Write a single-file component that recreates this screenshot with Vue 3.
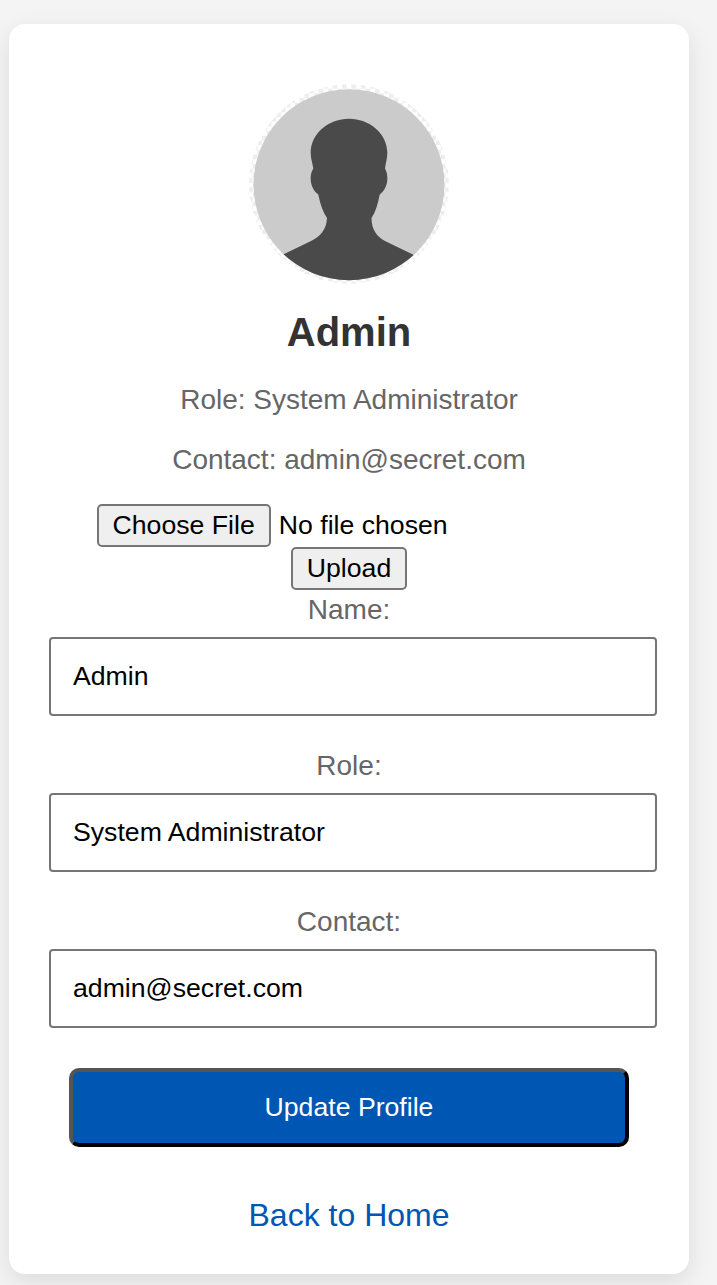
<script setup>
import { ref } from 'vue'

const profile = ref({
  name: 'Admin',
  role: 'System Administrator',
  contact: 'admin@secret.com',
})
const fields = [
  { key: 'name', label: 'Name:' },
  { key: 'role', label: 'Role:' },
  { key: 'contact', label: 'Contact:' },
]
</script>

<template>
  <main class="page">
    <section class="card">
      <svg class="avatar" viewBox="0 0 200 200" role="img" aria-label="Profile picture">
        <defs>
          <pattern id="checker" width="9.4" height="9.4" x="-1" y="0" patternUnits="userSpaceOnUse">
            <rect width="9.4" height="9.4" fill="#fff" />
            <rect width="4.7" height="4.7" fill="#eee" />
            <rect x="4.7" y="4.7" width="4.7" height="4.7" fill="#eee" />
          </pattern>
          <clipPath id="disc"><circle cx="100" cy="100.7" r="95.5" /></clipPath>
        </defs>
        <circle cx="100" cy="100" r="100" fill="url(#checker)" />
        <g clip-path="url(#disc)">
          <rect width="200" height="200" fill="#cbcbcb" />
          <path fill="#4a4a4a" d="M100 34.7C120 34.7 138.3 49 138.3 69C138.3 75 136.5 80 136 84.5C137.700 87.500 138.500 91.500 138.300 95.500C138 102 135 107.500 130.700 110.500C129 120 126.500 128 122.500 134C122.500 146 128 152.500 136 157L169 173V201H29V173L62 157C71 152.500 77.500 146 78 134C74 128 71 120 69.300 110.500C65 107.500 62 102 61.700 95.500C61.500 91.500 62.300 87.500 64.300 84.500C63.700 80 61.700 75 61.700 69C61.700 49 80 34.700 100 34.700Z" />
        </g>
      </svg>
      <h1>{{ profile.name }}</h1>
      <p>Role: {{ profile.role }}</p>
      <p>Contact: {{ profile.contact }}</p>
      <form class="upload" @submit.prevent>
        <div class="file">
          <button type="button" class="plain choose">Choose File</button>
          <span>No file chosen</span>
        </div>
        <button class="plain">Upload</button>
      </form>
      <form class="details" @submit.prevent>
        <div v-for="field in fields" :key="field.key" class="field">
          <label :for="field.key">{{ field.label }}</label>
          <input :id="field.key" v-model="profile[field.key]" type="text" />
        </div>
        <button class="update">Update Profile</button>
      </form>
      <a class="home" href="#">Back to Home</a>
    </section>
  </main>
</template>

<style>
body {
  background: #f4f4f4;
}
</style>

<style scoped>
.page {
  box-sizing: border-box;
  min-height: 1285px;
  padding: 24px 0 0 9px;
  overflow: hidden;
  background: #f4f4f4;
}
.card {
  box-sizing: border-box;
  width: 680px;
  height: 1250px;
  padding: 60px 40px 0;
  display: flex;
  flex-direction: column;
  align-items: center;
  background: #fff;
  border-radius: 16px;
  box-shadow: 0 8px 24px rgba(0, 0, 0, 0.1);
  font-family: "Liberation Sans", Arial, sans-serif;
  color: #666;
}
.avatar {
  display: block;
  width: 200px;
  height: 200px;
  border-radius: 50%;
}
h1 {
  margin: 25px 0 0;
  font-size: 40px;
  line-height: 46px;
  color: #333;
}
p {
  margin: 28px 0 0;
  font-size: 28px;
  line-height: 32px;
}
h1 + p {
  margin-top: 29px;
}
.upload {
  width: 504px;
  margin-top: 28px;
  display: flex;
  flex-direction: column;
  align-items: center;
}
.file {
  align-self: flex-start;
  display: flex;
  align-items: center;
  gap: 8px;
  font-size: 26.667px;
  color: #000;
}
.plain {
  box-sizing: border-box;
  height: 43px;
  margin: 0;
  padding: 1px 14px 3px;
  border: 2px solid #767676;
  border-radius: 5px;
  background: #efefef;
  color: #000;
  font: 26.667px/30px "Liberation Sans", Arial, sans-serif;
}
.choose {
  padding-left: 13.5px;
  padding-right: 14px;
}
.details {
  width: 100%;
  display: flex;
  flex-direction: column;
  align-items: center;
}
.field {
  width: 100%;
  height: 156px;
}
label {
  display: block;
  margin-bottom: 11px;
  padding-top: 4px;
  font-size: 28px;
  line-height: 32px;
  text-align: center;
}
input {
  display: block;
  box-sizing: border-box;
  width: 608px;
  height: 79px;
  padding: 0 22px;
  border: 2px solid #767676;
  border-radius: 4px;
  background: #fff;
  color: #000;
  font: 26.667px "Liberation Sans", Arial, sans-serif;
}
.update {
  box-sizing: border-box;
  width: 560px;
  height: 79px;
  margin-top: 10px;
  border: 4px solid;
  border-color: #555 #000 #000 #555;
  border-radius: 10px;
  background: #0056b3;
  color: #fff;
  font: 26.667px "Liberation Sans", Arial, sans-serif;
}
.home {
  margin-top: 50px;
  font-size: 32px;
  line-height: 36px;
  color: #0056b3;
  text-decoration: none;
}
</style>
